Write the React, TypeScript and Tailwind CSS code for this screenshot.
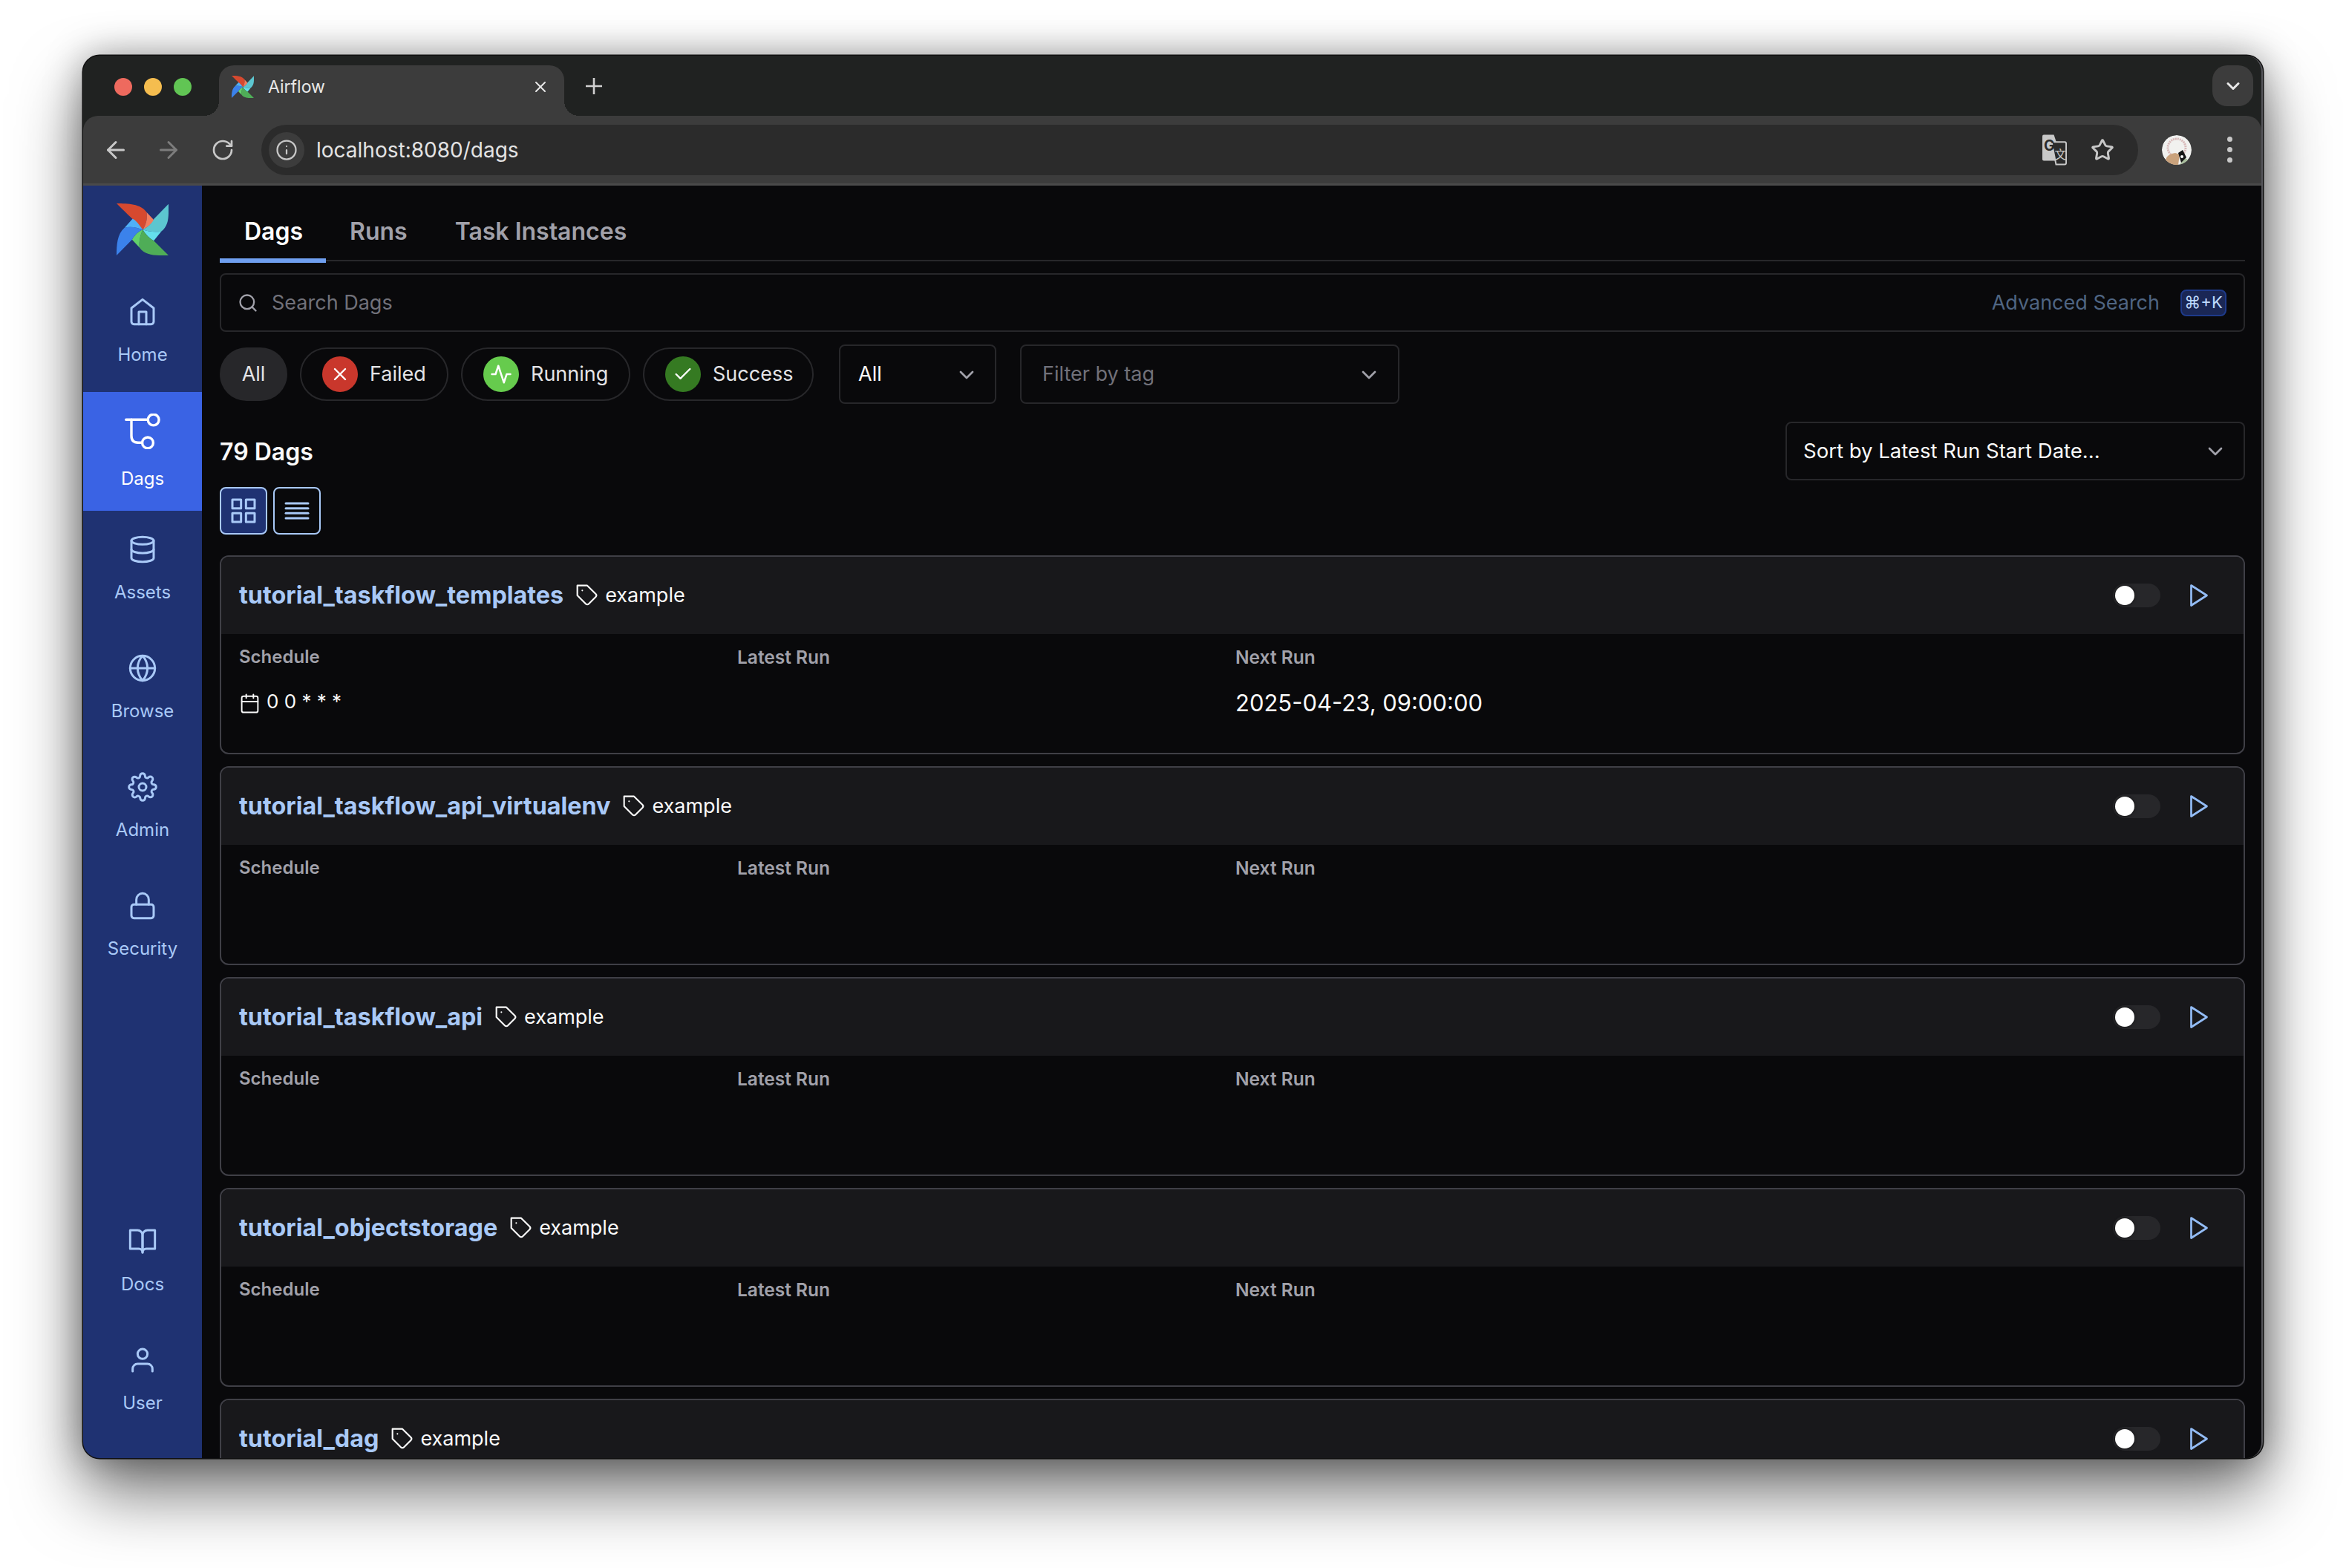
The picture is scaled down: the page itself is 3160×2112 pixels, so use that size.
import { ArrowLeft, ArrowRight, Info, RotateCw, Star } from 'lucide-react';
import {
  FiActivity,
  FiAlignJustify,
  FiBookOpen,
  FiCalendar,
  FiCheck,
  FiChevronDown,
  FiDatabase,
  FiGlobe,
  FiGrid,
  FiHome,
  FiLock,
  FiPlay,
  FiSearch,
  FiSettings,
  FiTag,
  FiUser,
  FiX,
} from 'react-icons/fi';

const dags = [
  { id: 'tutorial_taskflow_templates', cron: '0 0 * * *', next: '2025-04-23, 09:00:00' },
  { id: 'tutorial_taskflow_api_virtualenv' },
  { id: 'tutorial_taskflow_api' },
  { id: 'tutorial_objectstorage' },
  { id: 'tutorial_dag' },
];

function Pinwheel({ className }: { className?: string }) {
  return (
    <svg viewBox="83 103 208 208" className={className}>
      <path fill="#d6492f" d="M188 208C170 185 145 165 83 103C130 103 180 105 203 138C208 165 200 190 188 208Z" />
      <path fill="#f17d5f" d="M203 138L233 170C225 185 205 200 188 208C200 190 208 165 203 138Z" />
      <path fill="#5cc6d0" d="M188 208C205 200 225 185 233 165L291 105C291 150 295 190 262 215C235 220 210 215 188 208Z" />
      <path fill="#64e0ec" d="M188 208C210 215 235 220 262 215L232 252C215 245 198 225 188 208Z" />
      <path fill="#4fad57" d="M188 208C198 225 215 245 232 252L291 311C245 311 200 315 175 280C172 255 178 230 188 208Z" />
      <path fill="#62d06a" d="M188 208C178 230 172 255 175 280L145 248C155 230 170 215 188 208Z" />
      <path fill="#3b82eb" d="M188 208C170 215 155 230 145 248L83 311C83 270 85 225 115 200C140 193 165 200 188 208Z" />
      <path fill="#50b0f8" d="M188 208C165 200 140 193 115 200L147 165C160 170 175 190 188 208Z" />
    </svg>
  );
}

function DagIcon() {
  return (
    <svg viewBox="0 0 48 48" className="w-[48px] h-[48px]" fill="none" stroke="currentColor" strokeWidth={3.4} strokeLinecap="round">
      <path d="M1.7 8.3H31" />
      <circle cx="38.7" cy="8.5" r="7.4" />
      <path d="M9 8.3V30Q9 39.2 18 39.2H23" />
      <circle cx="31" cy="39.4" r="7.4" />
    </svg>
  );
}

function TranslateIcon() {
  return (
    <svg viewBox="0 0 34 42" className="w-[33px] h-[42px]">
      <path fill="#c8c8c8" d="M2 0H16L28 36H2A2 2 0 0 1 0 34V2A2 2 0 0 1 2 0Z" />
      <path fill="#2b2b2b" stroke="#c8c8c8" strokeWidth="2" d="M13 10H31A2 2 0 0 1 33 12V39A2 2 0 0 1 31 41H19Z" />
      <text x="2" y="22" fontSize="20" fontWeight="700" fill="#2b2b2b" fontFamily="Inter">G</text>
      <text x="17" y="33" fontSize="16" fill="#c8c8c8" fontFamily="'Noto Sans CJK SC', sans-serif">文</text>
    </svg>
  );
}

function Avatar() {
  return (
    <svg viewBox="0 0 40 40" className="w-[40px] h-[40px] rounded-full">
      <circle cx="20" cy="20" r="20" fill="#f1f1ef" />
      <circle cx="20" cy="17" r="12" fill="none" stroke="#d8b9b9" strokeWidth="3" strokeDasharray="2 1" />
      <path fill="#c9a27c" d="M6 40C3 30 8 26 18 24L24 26L22 40Z" />
      <path fill="#a8bd9c" d="M24 40L30 30L36 34L30 40Z" />
      <path fill="#151515" d="M22 24L28 20L33 30L26 37Z" />
      <circle cx="27" cy="29" r="2" fill="#fff" />
    </svg>
  );
}

function NavItem({ label, icon, active }: { label: string; icon: React.ReactNode; active?: boolean }) {
  return (
    <div
      className={`h-[160px] flex flex-col items-center ${
        active ? 'bg-[#3a63e4] text-white pt-[29px]' : 'text-[#a9c9f7] pt-[32px]'
      }`}
    >
      {icon}
      <span className={`${active ? 'mt-[24px]' : 'mt-[22px]'} text-[24px] leading-[32px]`}>{label}</span>
    </div>
  );
}

function StatePill({ label, dot, icon, width }: { label: string; dot: string; icon: React.ReactNode; width: string }) {
  return (
    <div className={`h-[72px] flex items-center pl-[28px] gap-[16px] rounded-full border-2 border-[#27272a] text-[27px] text-[#e4e4e7] ${width}`}>
      <span className={`w-[48px] h-[48px] rounded-full flex items-center justify-center text-white ${dot}`}>{icon}</span>
      <span className="pt-[1px]">{label}</span>
    </div>
  );
}

function DagCard({ id, cron, next }: { id: string; cron?: string; next?: string }) {
  return (
    <div className="h-[268px] shrink-0 rounded-[12px] border-2 border-[#3f3f46] bg-[#09090b] overflow-hidden">
      <div className="h-[104px] bg-[#18181b] flex items-center pl-[24px] pr-[42px]">
        <span className="pt-[1px] text-[32.3px] font-bold text-[#a9c9f7]">{id}</span>
        <FiTag className="w-[32px] h-[32px] ml-[16px] text-[#fafafa]" strokeWidth={1.6} />
        <span className="ml-[8px] pt-[1px] text-[27px] text-[#fafafa]">example</span>
        <div className="ml-auto w-[64px] h-[32px] rounded-full bg-[#27272a] flex items-center pl-[3px]">
          <span className="w-[26px] h-[26px] rounded-full bg-white shadow-[0_0_4px_rgba(0,0,0,0.6)]" />
        </div>
        <FiPlay className="ml-[34px] w-[36px] h-[36px] text-[#93bcf5]" strokeWidth={1.8} />
      </div>
      <div className="grid grid-cols-[671px_671px_1fr] px-[24px] pt-[15px]">
        <div>
          <div className="text-[24px] leading-[32px] font-semibold text-[#a1a1aa]">Schedule</div>
          {cron && (
            <div className="mt-[26px] h-[40px] flex items-center gap-[8px] text-[26px] text-[#fafafa]">
              <FiCalendar className="w-[29px] h-[29px]" strokeWidth={1.6} />
              <span className="-mt-[6px]">{cron}</span>
            </div>
          )}
        </div>
        <div className="text-[24.5px] leading-[32px] font-semibold text-[#a1a1aa]">Latest Run</div>
        <div>
          <div className="text-[24.5px] leading-[32px] font-semibold text-[#a1a1aa]">Next Run</div>
          {next && <div className="mt-[26px] text-[31px] leading-[40px] text-[#fafafa]">{next}</div>}
        </div>
      </div>
    </div>
  );
}

export default function App() {
  return (
    <div className="w-[3160px] h-[2112px] bg-white pt-[75px] pl-[112px] font-['Inter',sans-serif] overflow-hidden">
      <div className="relative w-[2936px] h-[1889px] flex flex-col rounded-[22px] overflow-hidden bg-[#202221] border-r-2 border-[#55555a] shadow-[0_46px_90px_rgba(0,0,0,0.55),0_0_50px_rgba(0,0,0,0.35)] ring-[1.5px] ring-[#111]">
        {/* Tab strip */}
        <div className="h-[81px] shrink-0 flex items-end">
          <div className="ml-[42px] mb-[27px] flex gap-[16px]">
            <span className="w-[24px] h-[24px] rounded-full bg-[#ee6a5e]" />
            <span className="w-[24px] h-[24px] rounded-full bg-[#f5bd4f]" />
            <span className="w-[24px] h-[24px] rounded-full bg-[#61c554]" />
          </div>
          <div className="relative ml-[37px] w-[465px] h-[68px] rounded-t-[20px] bg-[#3c3c3c] flex items-start pt-[14px] pl-[17px] pr-[20px] text-[23px] text-[#e8e8e8]">
            <div className="absolute -left-[20px] bottom-0 w-[20px] h-[20px] bg-[radial-gradient(circle_at_0_0,transparent_20px,#3c3c3c_20px)]" />
            <div className="absolute -right-[20px] bottom-0 w-[20px] h-[20px] bg-[radial-gradient(circle_at_100%_0,transparent_20px,#3c3c3c_20px)]" />
            <Pinwheel className="w-[30px] h-[30px]" />
            <span className="ml-[19px] leading-[30px]">Airflow</span>
            <FiX className="ml-auto mt-[3px] w-[24px] h-[24px] text-[#e8e8e8]" />
          </div>
          <svg viewBox="0 0 24 24" className="ml-[28px] mb-[28px] w-[24px] h-[24px]" stroke="#d0d0d0" strokeWidth="2.6">
            <path d="M12 1V23M1 12H23" />
          </svg>
          <div className="ml-auto mr-[11px] mb-[13px] w-[55px] h-[55px] rounded-[20px] bg-[#3c3c3c] flex items-center justify-center">
            <FiChevronDown className="w-[28px] h-[28px] text-[#e8e8e8]" strokeWidth={2.6} />
          </div>
        </div>

        {/* Toolbar */}
        <div className="h-[94px] shrink-0 flex items-center rounded-t-[20px] bg-[#3c3c3c] border-b-[3px] border-[#4a4a4a] text-[#c8c8c8]">
          <ArrowLeft className="ml-[26px] w-[36px] h-[36px]" strokeWidth={2} />
          <ArrowRight className="ml-[35px] w-[36px] h-[36px] text-[#7d7d7d]" strokeWidth={2} />
          <RotateCw className="ml-[39px] w-[32px] h-[32px]" strokeWidth={2} />
          <div className="ml-[36px] w-[2528px] h-[68px] rounded-full bg-[#2b2b2b] flex items-center pl-[10px] pr-[32px]">
            <span className="w-[48px] h-[48px] rounded-full bg-[#3c3c3c] flex items-center justify-center">
              <Info className="w-[30px] h-[30px]" strokeWidth={1.8} />
            </span>
            <span className="ml-[16px] text-[28px] text-[#e3e3e3]">localhost:8080/dags</span>
            <div className="ml-auto flex items-center gap-[32px]">
              <TranslateIcon />
              <Star className="w-[32px] h-[32px]" strokeWidth={2.2} />
            </div>
          </div>
          <div className="ml-[32px]">
            <Avatar />
          </div>
          <div className="ml-[48px] flex flex-col gap-[7px]">
            <span className="w-[7px] h-[7px] rounded-full bg-[#c8c8c8]" />
            <span className="w-[7px] h-[7px] rounded-full bg-[#c8c8c8]" />
            <span className="w-[7px] h-[7px] rounded-full bg-[#c8c8c8]" />
          </div>
        </div>

        <div className="flex-1 min-h-0 flex">
          {/* Sidebar */}
          <aside className="w-[160px] shrink-0 bg-[#1f3272] flex flex-col">
            <div className="h-[118px] pt-[24px] flex justify-center">
              <Pinwheel className="w-[70px] h-[70px]" />
            </div>
            <NavItem label="Home" icon={<FiHome className="w-[40px] h-[40px]" strokeWidth={1.8} />} />
            <NavItem label="Dags" active icon={<DagIcon />} />
            <NavItem label="Assets" icon={<FiDatabase className="w-[40px] h-[40px]" strokeWidth={1.8} />} />
            <NavItem label="Browse" icon={<FiGlobe className="w-[40px] h-[40px]" strokeWidth={1.8} />} />
            <NavItem label="Admin" icon={<FiSettings className="w-[40px] h-[40px]" strokeWidth={1.8} />} />
            <NavItem label="Security" icon={<FiLock className="w-[40px] h-[40px]" strokeWidth={1.8} />} />
            <div className="mt-auto pb-[24px] flex flex-col">
              <NavItem label="Docs" icon={<FiBookOpen className="w-[40px] h-[40px]" strokeWidth={1.8} />} />
              <NavItem label="User" icon={<FiUser className="w-[40px] h-[40px]" strokeWidth={1.8} />} />
            </div>
          </aside>

          {/* Page */}
          <main className="flex-1 min-w-0 bg-[#09090b] pl-[24px] pr-[22px] overflow-hidden">
            <div className="h-[102px] flex border-b-2 border-[#27272a] text-[32px] leading-[40px] font-semibold text-[#a1a1aa]">
              <div className="w-[143px] h-[104px] pl-[33px] pt-[42px] border-b-[6px] border-[#6f9ff0] text-white">Dags</div>
              <div className="h-[104px] px-[32px] pt-[42px]">Runs</div>
              <div className="h-[104px] px-[32px] pt-[42px]">Task Instances</div>
            </div>

            <div className="mt-[16px] h-[79px] flex items-center rounded-[8px] border-2 border-[#27272a] pl-[22px] pr-[23px] text-[27px]">
              <FiSearch className="w-[28px] h-[28px] text-[#a1a1aa]" strokeWidth={2} />
              <span className="ml-[18px] pt-[2px] text-[#71717a]">Search Dags</span>
              <span className="ml-auto pt-[2px] text-[#4f6583]">Advanced Search</span>
              <kbd className="ml-[28px] w-[62px] h-[36px] rounded-[8px] bg-[#1a2755] border-2 border-[#1e3a8a] flex items-center justify-center text-[22px] text-[#bfdbfe] font-['Inter',sans-serif]">
                ⌘+K
              </kbd>
            </div>

            <div className="mt-[17px] h-[80px] flex items-center gap-[17px]">
              <div className="h-[72px] w-[91px] pt-[1px] flex items-center justify-center rounded-full bg-[#27272a] text-[27px] text-[#e4e4e7]">All</div>
              <StatePill label="Failed" width="w-[200px]" dot="bg-[#c9372c]" icon={<FiX className="w-[28px] h-[28px]" strokeWidth={2} />} />
              <StatePill label="Running" width="w-[228px]" dot="bg-[#66cb4d]" icon={<FiActivity className="w-[30px] h-[30px]" strokeWidth={2} />} />
              <StatePill label="Success" width="w-[230px]" dot="bg-[#357a22]" icon={<FiCheck className="w-[28px] h-[28px]" strokeWidth={2} />} />
              <div className="ml-[17px] w-[212px] h-[80px] pt-[1px] flex items-center justify-between rounded-[8px] border-2 border-[#27272a] pl-[24px] pr-[22px] text-[27px] text-[#fafafa]">
                All
                <FiChevronDown className="w-[32px] h-[32px] text-[#a1a1aa]" />
              </div>
              <div className="ml-[15px] w-[511px] h-[80px] pt-[1px] flex items-center justify-between rounded-[8px] border-2 border-[#27272a] pl-[28px] pr-[23px] text-[27px] text-[#71717a]">
                Filter by tag
                <FiChevronDown className="w-[32px] h-[32px] text-[#a1a1aa]" />
              </div>
            </div>

            <div className="mt-[24px] h-[79px] flex items-center justify-between">
              <span className="pt-[3px] text-[32px] font-semibold text-[#fafafa]">79 Dags</span>
              <div className="w-[619px] h-[79px] flex items-center justify-between rounded-[8px] border-2 border-[#27272a] pl-[22px] pr-[22px] text-[27.5px] text-[#fafafa]">
                Sort by Latest Run Start Date...
                <FiChevronDown className="w-[32px] h-[32px] text-[#a1a1aa]" />
              </div>
            </div>

            <div className="mt-[9px] flex gap-[8px]">
              <div className="w-[64px] h-[64px] rounded-[8px] border-2 border-[#a9c9f7] bg-[#1f3272] flex items-center justify-center text-[#a9c9f7]">
                <FiGrid className="w-[40px] h-[40px]" strokeWidth={1.8} />
              </div>
              <div className="w-[64px] h-[64px] rounded-[8px] border-2 border-[#a9c9f7] flex items-center justify-center text-[#a9c9f7]">
                <FiAlignJustify className="w-[40px] h-[40px]" strokeWidth={1.8} />
              </div>
            </div>

            <div className="mt-[28px] flex flex-col gap-[16px]">
              {dags.map((dag) => (
                <DagCard key={dag.id} {...dag} />
              ))}
            </div>
          </main>
        </div>
      </div>
    </div>
  );
}
